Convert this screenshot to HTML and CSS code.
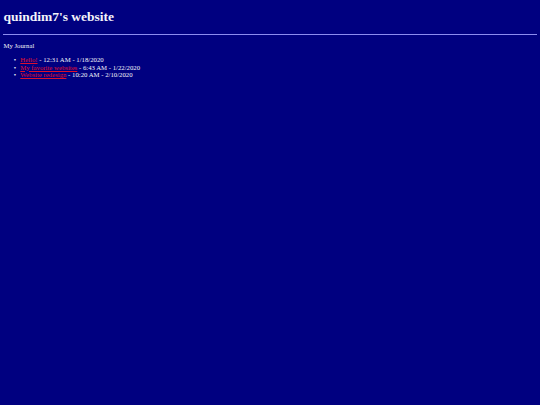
FILE: index.html
```html
<!DOCTYPE html>
<html>
<head>
<meta charset="utf-8">
<title>quindim7's website</title>
<link rel="stylesheet" href="styles.css">
</head>
<body class="page">
<h1 class="title">quindim7's website</h1>
<hr class="rule">
<p class="section">My Journal</p>
<ul class="entries">
<li class="entry"><a class="entry-link" href="#">Hello!</a> - 12:31 AM - 1/18/2020</li>
<li class="entry"><a class="entry-link" href="#">My favorite websites</a> - 6:43 AM - 1/22/2020</li>
<li class="entry"><a class="entry-link" href="#">Website redesign</a> - 10:20 AM - 2/10/2020</li>
</ul>
</body>
</html>
```

FILE: styles.css
```css
html {
  background: #000080;
}
.page {
  margin: 3.375px;
  font-family: "Liberation Serif", "Times New Roman", serif;
  font-size: 6.75px;
  color: #f4f4fa;
  background: #000080;
}
.title {
  font-size: 13.5px;
  font-weight: bold;
  margin: 6px 0 9.05px;
}
.rule {
  margin: 3.375px 0;
  border: none;
  border-top: 1px solid #8c8cf0;
  height: 0;
}
.section {
  margin: 6.75px 0;
}
.entries {
  margin: 6.75px 0;
  padding-left: 16.9px;
  list-style: none;
}
.entry {
  line-height: 7.6px;
}
.entry::before {
  content: "\2022";
  display: inline-block;
  width: 6.5px;
  margin-left: -6.5px;
}
.entry-link {
  color: #e0102c;
  text-decoration: underline;
  text-decoration-thickness: 0.5px;
}
```
